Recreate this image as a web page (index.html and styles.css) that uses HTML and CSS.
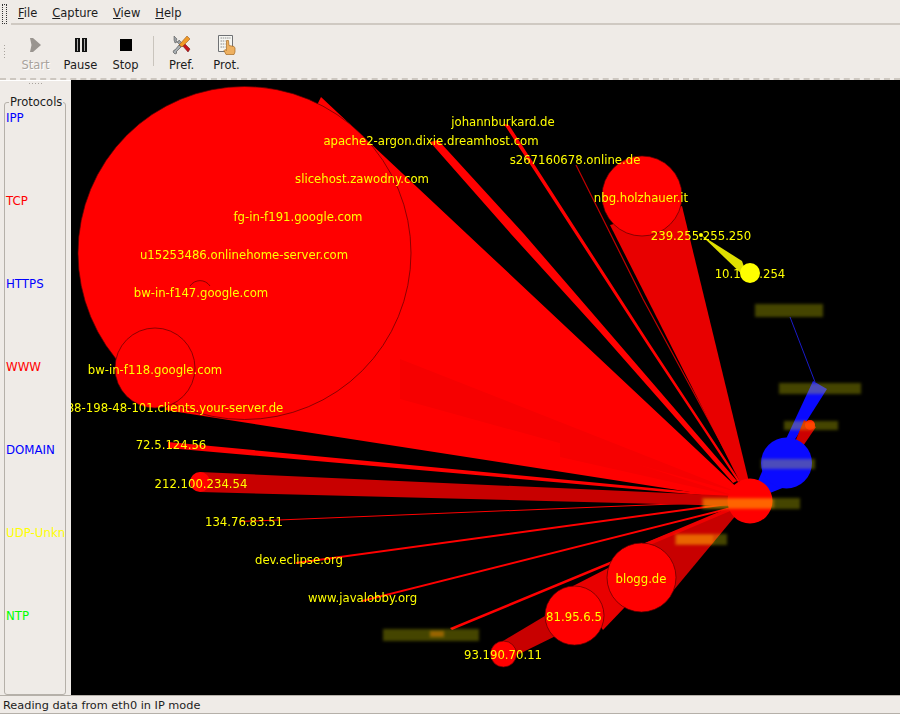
FILE: index.html
```html
<!DOCTYPE html>
<html lang="en">
<head>
<meta charset="utf-8">
<title>EtherApe</title>
<link rel="stylesheet" href="styles.css">
</head>
<body>
<div class="app">
  <header class="menubar">
    <span class="menu-grip"></span>
    <nav class="menus">
      <span class="menu"><u>F</u>ile</span>
      <span class="menu"><u>C</u>apture</span>
      <span class="menu"><u>V</u>iew</span>
      <span class="menu"><u>H</u>elp</span>
    </nav>
  </header>
  <div class="toolbar">
    <span class="tool-grip"></span>
    <div class="tool disabled">
      <svg class="icon" viewBox="0 0 20 20"><path d="M4 3h3l8 7-8 7H4l1.500-7z" fill="#9a9590"/></svg>
      <span>Start</span>
    </div>
    <div class="tool">
      <svg class="icon" viewBox="0 0 20 20"><path d="M4 3h5v14H4zM11 3h5v14h-5z" fill="#111"/><path d="M6 4h1v12H6zM13 4h1v12h-1z" fill="#aaa"/></svg>
      <span>Pause</span>
    </div>
    <div class="tool">
      <svg class="icon" viewBox="0 0 20 20"><path d="M4 4h12v12H4z" fill="#000"/></svg>
      <span>Stop</span>
    </div>
    <span class="tool-sep"></span>
    <div class="tool">
      <svg class="icon" viewBox="0 0 20 20">
        <path d="M2 1l3 3-1 2 2 1 1-2 5 5-2 2-5-5-2 1-1-3z" fill="#9da2a6" stroke="#444" stroke-width=".5"/>
        <path d="M10 10l2-2 6 6-2 3z" fill="#c4161c" stroke="#5a0a0a" stroke-width=".5"/>
        <path d="M7 10l8-9 3 3-8 8z" fill="#f09a28" stroke="#8a4a10" stroke-width=".5"/>
        <path d="M3 15l4-5 2 2-5 5 1 1-2 1-2-2 1-2z" fill="#aab0b4" stroke="#333" stroke-width=".5"/>
      </svg>
      <span>Pref.</span>
    </div>
    <div class="tool">
      <svg class="icon" viewBox="0 0 20 20">
        <path d="M1.500 .5h14v16h-14z" fill="#f6f6f2" stroke="#6f7174" stroke-width="1"/>
        <path d="M3.500 3h10M3.500 6h5M3.500 9h5M3.500 12h5" stroke="#8c8c8c" stroke-width="1" stroke-dasharray="1.500 .7"/>
        <path d="M9 19.500l-2-4 1-1 1.500 1V5.500h2l.5 5 5 1 1 1.500v4l-1 2.500z" fill="#eeb060" stroke="#a86a20" stroke-width=".7"/>
      </svg>
      <span>Prot.</span>
    </div>
  </div>
  <main class="main">
    <aside class="sidebar">
      <span class="side-grip"></span>
      <fieldset class="protocols">
        <legend>Protocols</legend>
        <span class="proto blue">IPP</span>
        <span class="proto red">TCP</span>
        <span class="proto blue">HTTPS</span>
        <span class="proto red">WWW</span>
        <span class="proto blue">DOMAIN</span>
        <span class="proto yellow">UDP-Unkn</span>
        <span class="proto green">NTP</span>
      </fieldset>
    </aside>
    <div class="canvas">
      <svg class="diagram" viewBox="71 81 829 614" width="829" height="614">
        <defs><filter id="smear" x="-20%" y="-60%" width="140%" height="220%"><feGaussianBlur stdDeviation="1.800"/></filter></defs>
        <g class="links-red">
          <path d="M321 98 L467 235 L745 496 L735 500 L165 411 L244 254 Z"/>
          <path d="M430 143 L438 141 L524 235 L606 330 L737 482 L733 484 L600 333 L511 235 Z"/>
          <path d="M504 125 L509 126 L650 345 L740 482 L738 483 L648 347 Z"/>
          <path d="M168 443 L736 497 L736 499 L168 449 Z"/>
          <path d="M240 522 L735 502 L735 503 L240 523 Z"/>
          <path d="M296 563 L735 503 L735 505 L296 565 Z"/>
          <path d="M362 601 L735 507 L735 509 L362 603 Z"/>
          <path d="M450 629 L735 511 L737 513 L452 631 Z"/>
        </g>
        <g class="bands">
          <path d="M740 494 L400 360 L400 400 Z"/>
          <path d="M738 498 L560 440 L560 458 Z"/>
        </g>
        <path class="thin-dark" d="M576 166 L643 300 L741 481"/>
        <path class="link-soft" d="M610 226 L682 207 L749 483 L742 487 Z"/>
        <g class="links-dark">
          <path d="M200 473 L736 497 L736 507 L200 493 Z"/>
          <path d="M640 546 L733 509 L737 515 L668 598 Z"/>
          <path d="M503 642 L560 608 L574 628 L517 656 Z"/>
        </g>
        <path class="link-soft" d="M573 587 L612 567 L640 590 L625 608 L603 631 Z"/>
        <path class="links-strip" d="M645 544 L733 507 L735 510 L650 546 Z"/>
        <g class="links-blue">
          <path d="M813 382 L827 390 L794 442 L786 440 Z"/>
          <path d="M764 468 L758 482 L770 494 L790 486 Z"/>
          <path class="thin-blue" d="M790 318 L815 383"/>
        </g>
        <path class="link-deep" d="M795 443 L804 421 L816 428 L803 447 Z"/>
        <circle class="node" cx="244.500" cy="254" r="166.500"/>
        <circle class="node" cx="155" cy="369" r="40"/>
        <path class="arc" d="M190 287 A 12 12 0 0 1 210 287"/>
        <circle class="node" cx="642" cy="197" r="40"/>
        <circle class="node" cx="641.500" cy="578.500" r="34.500"/>
        <circle class="node" cx="574.500" cy="616.500" r="29.500"/>
        <circle class="node" cx="503.500" cy="655" r="13"/>
        <circle class="node plain" cx="200" cy="483" r="10"/>
        <circle class="node-blue" cx="786.500" cy="464" r="25.500"/>
        <circle class="node plain" cx="750" cy="502" r="22.500"/>
        <circle class="node plain" cx="810" cy="426" r="5"/>
        <path class="link-yellow" d="M701 236 L742 262 L749 282 Z"/>
        <circle class="node-yellow" cx="701" cy="236" r="2"/>
        <circle class="node-yellow" cx="750" cy="274" r="10"/>
        <g class="smears" filter="url(#smear)">
          <rect x="755" y="305" width="68" height="13"/>
          <rect x="779" y="384" width="82" height="11"/>
          <rect x="784" y="422" width="54" height="9"/>
          <rect x="761" y="460" width="54" height="10"/>
          <rect x="702" y="499" width="98" height="11"/>
          <rect x="675" y="535" width="52" height="11"/>
          <rect x="383" y="630" width="96" height="12"/>
          <rect class="hot" x="704" y="500" width="70" height="9"/>
          <rect class="hot" x="677" y="536" width="36" height="9"/>
          <rect class="hot" x="430" y="632" width="14" height="6"/>
        </g>
        <g class="labels">
          <text x="503" y="127">johannburkard.de</text>
          <text x="431" y="146">apache2-argon.dixie.dreamhost.com</text>
          <text x="575" y="165">s267160678.online.de</text>
          <text x="362" y="184">slicehost.zawodny.com</text>
          <text x="298" y="222">fg-in-f191.google.com</text>
          <text x="244" y="260">u15253486.onlinehome-server.com</text>
          <text x="201" y="298">bw-in-f147.google.com</text>
          <text x="155" y="375">bw-in-f118.google.com</text>
          <text x="175" y="413">88-198-48-101.clients.your-server.de</text>
          <text x="171" y="450">72.5.124.56</text>
          <text x="201" y="489">212.100.234.54</text>
          <text x="244" y="527">134.76.83.51</text>
          <text x="299" y="565">dev.eclipse.org</text>
          <text x="362.500" y="603">www.javalobby.org</text>
          <text x="641" y="203">nbg.holzhauer.it</text>
          <text x="701" y="241">239.255.255.250</text>
          <text x="750" y="279">10.10.0.254</text>
          <text x="641" y="584">blogg.de</text>
          <text x="574" y="622">81.95.6.5</text>
          <text x="503" y="660">93.190.70.11</text>
        </g>
      </svg>
    </div>
  </main>
  <footer class="statusbar">Reading data from eth0 in IP mode</footer>
</div>
</body>
</html>
```
FILE: styles.css
```css
* { box-sizing: border-box; }
html, body { margin: 0; padding: 0; }
body { background: #efebe7; font: 11.500px/1 "DejaVu Sans", sans-serif; color: #1c1c1c; }
.app { width: 900px; height: 714px; display: flex; flex-direction: column; overflow: hidden; }

.menubar { height: 25px; display: flex; align-items: center; gap: 4px; padding: 3px 0 0 2px; flex: none; }
.menu-grip { width: 5px; height: 20px; border: 1px dotted #333; margin-top: -1px; }
.menus { flex: 1; height: 22px; display: flex; gap: 15px; padding: 2px 0 0 7px; align-items: center; border-bottom: 2px solid #cfc9c2; align-self: stretch; }
.menu u { text-underline-offset: 1px; }

.toolbar { height: 55px; flex: none; display: flex; align-items: flex-start; padding: 10px 0 0 3px; border-bottom: 2px dashed #cdc7c0; box-shadow: 0 1px 0 #fff; }
.tool-grip { width: 4px; height: 15px; margin: 9px 6px 0 0; background-image: radial-gradient(#a8a39d 1px, transparent 1px); background-size: 3px 3px; }
.tool { width: 45px; display: flex; flex-direction: column; align-items: center; gap: 5px; }
.tool .icon { width: 20px; height: 20px; }
.tool.disabled { color: #a8a39d; text-shadow: 1px 1px 0 #fff; }
.tool-sep { width: 1px; height: 30px; margin: 1px 5px 0 5px; background: #c9c4bd; }

.main { flex: 1; display: flex; min-height: 0; }
.sidebar { width: 71px; flex: none; display: flex; flex-direction: column; padding-top: 2px; }
.side-grip { width: 15px; height: 4px; margin: 0 0 11px 28px; background-image: radial-gradient(#a8a39d 1px, transparent 1px); background-size: 3px 3px; flex: none; }
.protocols { width: 62px; flex: 1; margin: 0 0 5px 4px; padding: 4px 0 0 1px; border: 1px solid #b5b0a9; border-radius: 3px; display: flex; flex-direction: column; min-width: 0; }
.protocols legend { padding: 0 1px; margin-left: 3px; white-space: nowrap; font-size: 11.500px; }
.proto { height: 83px; flex: none; white-space: nowrap; font-size: 11.800px; }
.blue { color: #0000ff; }
.red { color: #ff0000; }
.yellow { color: #ffff00; }
.green { color: #00ff00; }

.canvas { flex: 1; background: #000; min-width: 0; overflow: hidden; }
.diagram { display: block; }
.links-red path { fill: #ff0000; }
.bands path { fill: #f60000; }
.thin-dark { stroke: #c00000; stroke-width: 1.200; fill: none; }
.link-soft { fill: #e80000; }
.links-dark path { fill: #c80000; }
.links-strip { fill: #ee0000; }
.links-blue path { fill: #0a0aff; }
.links-blue .thin-blue { fill: none; stroke: #1a1ac8; stroke-width: 1; }
.link-deep { fill: #cc0000; }
.node { fill: #ff0000; stroke: #5a0000; stroke-width: .7; }
.node.plain { stroke: none; }
.arc { fill: none; stroke: #5a0000; stroke-width: .7; }
.node-blue { fill: #0a0aff; }
.node-yellow { fill: #ffff00; }
.link-yellow { fill: #e0e000; }
.smears rect { fill: #ffff00; opacity: .27; }
.smears .hot { fill: #ff8a00; opacity: .45; }
.labels text { fill: #ffff00; font: 11.700px "DejaVu Sans", sans-serif; text-anchor: middle; }

.statusbar { height: 19px; flex: none; padding: 4px 0 0 3px; border-top: 1px solid #b5b0a9; border-bottom: 1px solid #b5b0a9; white-space: nowrap; font-size: 11.300px; }
```
